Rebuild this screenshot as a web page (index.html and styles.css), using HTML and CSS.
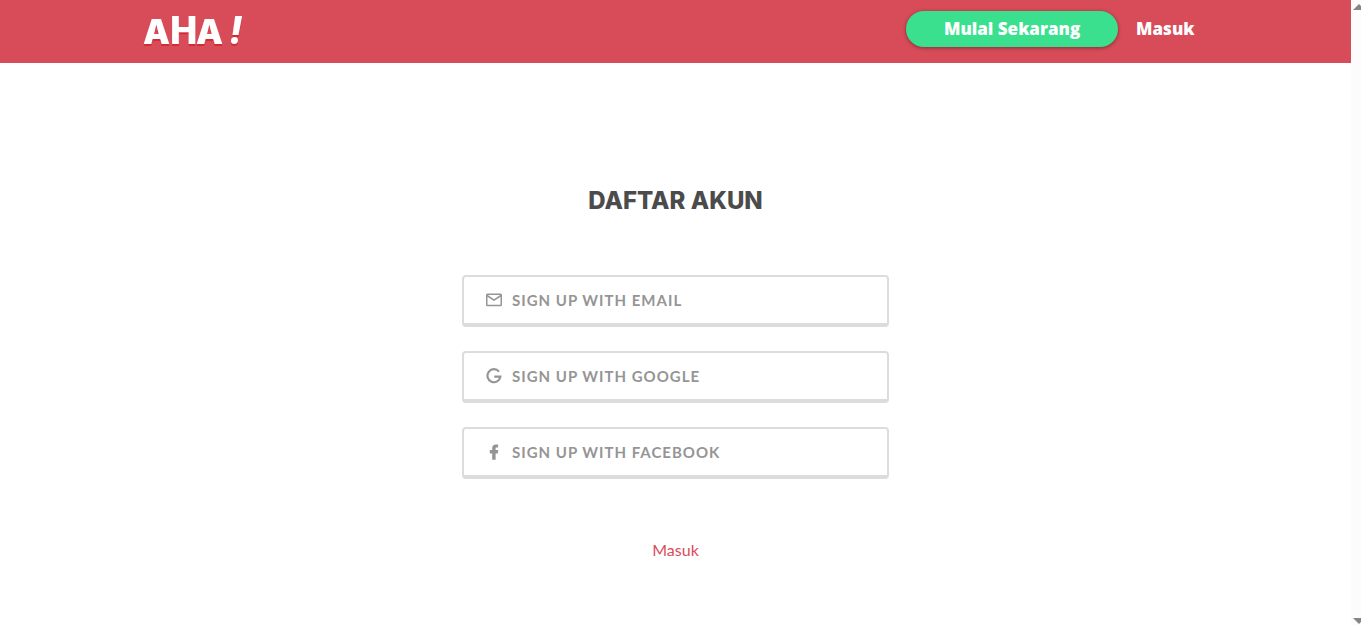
FILE: index.html
```html
<!DOCTYPE html>
<html lang="id">
<head>
<meta charset="utf-8">
<meta name="viewport" content="width=device-width, initial-scale=1">
<title>Daftar Akun</title>
<link rel="stylesheet" href="styles.css">
</head>
<body>
<div class="page">
  <header class="topbar">
    <div class="topbar-inner">
      <a class="logo" href="#">
        <svg class="logo-art" width="112" height="58" viewBox="0 0 112 58">
          <text class="logo-a" x="-1" y="44">A</text>
          <text class="logo-h" x="26" y="44">H</text>
          <text class="logo-a" x="52" y="44">A</text>
          <text class="logo-mark" x="85" y="44">!</text>
        </svg>
      </a>
      <nav class="nav">
        <button class="start" type="button">Mulai Sekarang</button>
        <a class="login" href="#">Masuk</a>
      </nav>
    </div>
  </header>
  <main class="signup">
    <h1 class="title">DAFTAR AKUN</h1>
    <div class="options">
      <button class="option" type="button">
        <svg class="icon" viewBox="0 0 16 16" aria-hidden="true"><rect x="0.75" y="2.25" width="14.5" height="11.2" rx="0.8" fill="none" stroke="currentColor" stroke-width="1.5"/><path d="M1 3.500l7 4.600l7-4.600" fill="none" stroke="currentColor" stroke-width="1.500"/></svg>
        <span>SIGN UP WITH EMAIL</span>
      </button>
      <button class="option" type="button">
        <svg class="icon" viewBox="0 0 16 16" aria-hidden="true"><path d="M13 3.600A6.500 6.500 0 1 0 14.400 8.700H8.200" fill="none" stroke="currentColor" stroke-width="2.200"/></svg>
        <span>SIGN UP WITH GOOGLE</span>
      </button>
      <button class="option" type="button">
        <svg class="icon" viewBox="0 0 16 16" aria-hidden="true"><path d="M6.200 15.800V9.600H3.800V6h2.400V4.200C6.200 1.800 7.600.500 9.800.500h2.300v3.100h-1.400c-.9 0-1.100.400-1.100 1.200V6h2.700l-.5 3.600H9.600v6.200z" fill="currentColor"/></svg>
        <span>SIGN UP WITH FACEBOOK</span>
      </button>
    </div>
    <a class="signin" href="#">Masuk</a>
  </main>
</div>
<div class="scroll" aria-hidden="true">
  <svg width="10" height="12" viewBox="0 0 10 12"><path d="M2 10h12L8 4z" fill="#858585"/></svg>
  <svg width="10" height="12" viewBox="0 0 10 12"><path d="M2 5h12L8 11z" fill="#858585"/></svg>
</div>
</body>
</html>
```
FILE: styles.css
```css
* {
  box-sizing: border-box;
}

body {
  margin: 0;
  min-height: 100vh;
  display: flex;
  background: #fff;
  font-family: Lato, "Open Sans", sans-serif;
}

a {
  text-decoration: none;
}

button {
  font: inherit;
  cursor: pointer;
}

.page {
  flex: 1;
}

.topbar {
  background: #d84c5a;
  padding: 0 24px 5px;
}

.topbar-inner {
  max-width: 1064px;
  margin: 0 auto;
  padding-right: 13px;
  display: flex;
  justify-content: space-between;
  align-items: center;
}

.logo {
  display: block;
  height: 58px;
}

.logo-art {
  overflow: visible;
  fill: #fff;
  filter: drop-shadow(0 2px 0 #d22b32);
}

.logo-a {
  font: 900 34px Inter, sans-serif;
}

.logo-h {
  font: 900 39px Roboto, sans-serif;
}

.logo-mark {
  font: italic 800 38px Inter, sans-serif;
}

.nav {
  display: flex;
  align-items: center;
  gap: 18px;
  font-family: "Open Sans", sans-serif;
  font-size: 17px;
  line-height: 36px;
  font-weight: 800;
}

.start {
  width: 212px;
  height: 36px;
  padding: 0;
  border: 0;
  border-radius: 18px;
  background: #3be08f;
  color: #fff;
  box-shadow: 0 1px 4px rgba(0, 0, 0, 0.4);
}

.login {
  color: #fff;
}

.signup {
  display: flex;
  flex-direction: column;
  align-items: center;
  padding: 122px 24px 60px;
}

.title {
  margin: 0;
  color: #4b4b4b;
  font-family: Inter, sans-serif;
  font-size: 24px;
  line-height: 32px;
  font-weight: 800;
}

.options {
  width: 100%;
  max-width: 427px;
  margin: 58px 0 59px;
  display: grid;
  gap: 24px;
}

.option {
  height: 52px;
  padding: 0 22px 1px;
  display: flex;
  align-items: center;
  gap: 10px;
  border: 2px solid #dcdcdc;
  border-bottom-width: 4px;
  border-radius: 4px;
  background: #fff;
  color: #959595;
  font-size: 15px;
  line-height: 18px;
  font-weight: 700;
  letter-spacing: 1px;
}

.icon {
  width: 16px;
  height: 16px;
}

.signin {
  color: #d84c5a;
  font-size: 16px;
  line-height: 24px;
}

.scroll {
  width: 10px;
  display: flex;
  flex-direction: column;
  justify-content: space-between;
  background: #fcfcfc;
}
```
